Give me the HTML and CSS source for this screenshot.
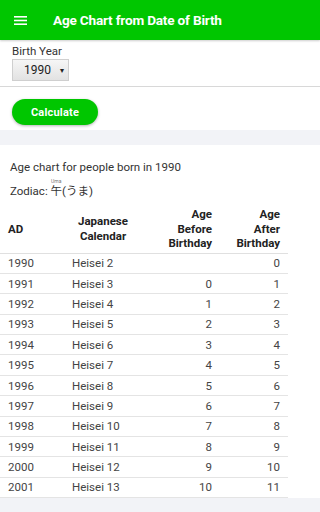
FILE: index.html
```html
<!DOCTYPE html>
<html>
<head>
<meta charset="utf-8">
<link rel="stylesheet" href="styles.css">
</head>
<body>
<header class="appbar">
  <svg class="menu" width="13" height="9" viewBox="0 0 13 9"><rect x="0" y="0" width="13" height="1.6" fill="#fff"/><rect x="0" y="3.7" width="13" height="1.6" fill="#fff"/><rect x="0" y="7.4" width="13" height="1.6" fill="#fff"/></svg>
  <h1 class="title">Age Chart from Date of Birth</h1>
</header>
<section class="form">
  <div class="label">Birth Year</div>
  <div class="select"><span>1990</span><span class="arrow">▾</span></div>
</section>
<div class="actions">
  <button class="btn">Calculate</button>
</div>
<div class="band"></div>
<section class="result">
  <p class="intro">Age chart for people born in 1990</p>
  <p class="zodiac">Zodiac: <ruby>午<rt>Uma</rt></ruby>(うま)</p>
</section>
<table class="chart">
  <colgroup><col class="c1"><col class="c2"><col class="c3"><col class="c4"></colgroup>
  <thead>
    <tr><th class="l">AD</th><th class="m">Japanese<br>Calendar</th><th class="r">Age<br>Before<br>Birthday</th><th class="r">Age<br>After<br>Birthday</th></tr>
  </thead>
  <tbody>
    <tr><td>1990</td><td>Heisei 2</td><td class="r"></td><td class="r">0</td></tr>
    <tr><td>1991</td><td>Heisei 3</td><td class="r">0</td><td class="r">1</td></tr>
    <tr><td>1992</td><td>Heisei 4</td><td class="r">1</td><td class="r">2</td></tr>
    <tr><td>1993</td><td>Heisei 5</td><td class="r">2</td><td class="r">3</td></tr>
    <tr><td>1994</td><td>Heisei 6</td><td class="r">3</td><td class="r">4</td></tr>
    <tr><td>1995</td><td>Heisei 7</td><td class="r">4</td><td class="r">5</td></tr>
    <tr><td>1996</td><td>Heisei 8</td><td class="r">5</td><td class="r">6</td></tr>
    <tr><td>1997</td><td>Heisei 9</td><td class="r">6</td><td class="r">7</td></tr>
    <tr><td>1998</td><td>Heisei 10</td><td class="r">7</td><td class="r">8</td></tr>
    <tr><td>1999</td><td>Heisei 11</td><td class="r">8</td><td class="r">9</td></tr>
    <tr><td>2000</td><td>Heisei 12</td><td class="r">9</td><td class="r">10</td></tr>
    <tr><td>2001</td><td>Heisei 13</td><td class="r">10</td><td class="r">11</td></tr>
  </tbody>
</table>
<div class="band bottom"></div>
</body>
</html>
```

FILE: styles.css
```css
html, body {
  margin: 0;
  padding: 0;
  background: #fff;
  font-family: Roboto, "Noto Sans CJK JP", sans-serif;
  color: #333;
  overflow: hidden;
}
.appbar {
  height: 40px;
  background: #00c600;
  display: flex;
  align-items: center;
  box-shadow: 0 1px 2px rgba(0,0,0,0.2);
  position: relative;
}
.menu {
  margin-left: 14px;
  width: 13px;
  height: 9px;
  flex: none;
}
.title {
  margin: 0 0 0 26px;
  font-size: 13.6px;
  font-weight: 700;
  color: #fff;
  letter-spacing: -0.2px;
  white-space: nowrap;
}
.form {
  padding: 4px 12px 5px;
  border-bottom: 1px solid #d8d8d8;
}
.label {
  font-size: 11.5px;
  line-height: 15px;
  color: #333;
}
.select {
  height: 20px;
  border: 1px solid #cfcfcf;
  background: linear-gradient(#f6f6f6, #e2e2e2);
  display: flex;
  align-items: center;
  justify-content: space-between;
  padding: 0 4px 0 11px;
  box-sizing: content-box;
  width: 40px;
  font-size: 12px;
  color: #222;
}
.arrow {
  font-size: 8px;
  color: #222;
}
.actions {
  padding: 12px 12px 5px;
}
.btn {
  display: block;
  width: 86px;
  height: 26px;
  border: none;
  border-radius: 13px;
  background: #00c600;
  color: #fff;
  font-family: Roboto, sans-serif;
  font-weight: 700;
  font-size: 11px;
  letter-spacing: 0.2px;
  box-shadow: 0 1px 3px rgba(0,0,0,0.3);
  padding: 0;
}
.band {
  height: 15px;
  background: #f2f3f7;
}
.result {
  padding: 14px 10px 0;
}
.intro {
  margin: 0;
  font-size: 11.5px;
  line-height: 16px;
  color: #333;
}
.zodiac {
  margin: 4px 0 0;
  font-size: 11.5px;
  line-height: 16px;
  color: #333;
}
ruby {
  line-height: 16px;
}
rt {
  font-size: 5px;
  line-height: 6px;
  color: #777;
}
.chart {
  width: 288px;
  border-collapse: collapse;
  margin-top: 6px;
  font-size: 11.5px;
  table-layout: fixed;
}
.c1 { width: 64px; }
.c2 { width: 78px; }
.c3 { width: 78px; }
.c4 { width: 68px; }
.chart th {
  font-weight: 700;
  color: #222;
  line-height: 14.5px;
  padding: 2px 8px 2px;
  vertical-align: middle;
  border-bottom: 1px solid #e0e0e0;
}
.chart th.l { text-align: left; }
.chart th.m { text-align: center; }
.chart th.r { text-align: right; }
.chart td {
  height: 20.4px;
  padding: 0 8px;
  box-sizing: border-box;
  color: #444;
  border-bottom: 1px solid #e4e4e4;
  line-height: 14px;
}
.chart td.r { text-align: right; }
.bottom {
  height: 20px;
}
```
